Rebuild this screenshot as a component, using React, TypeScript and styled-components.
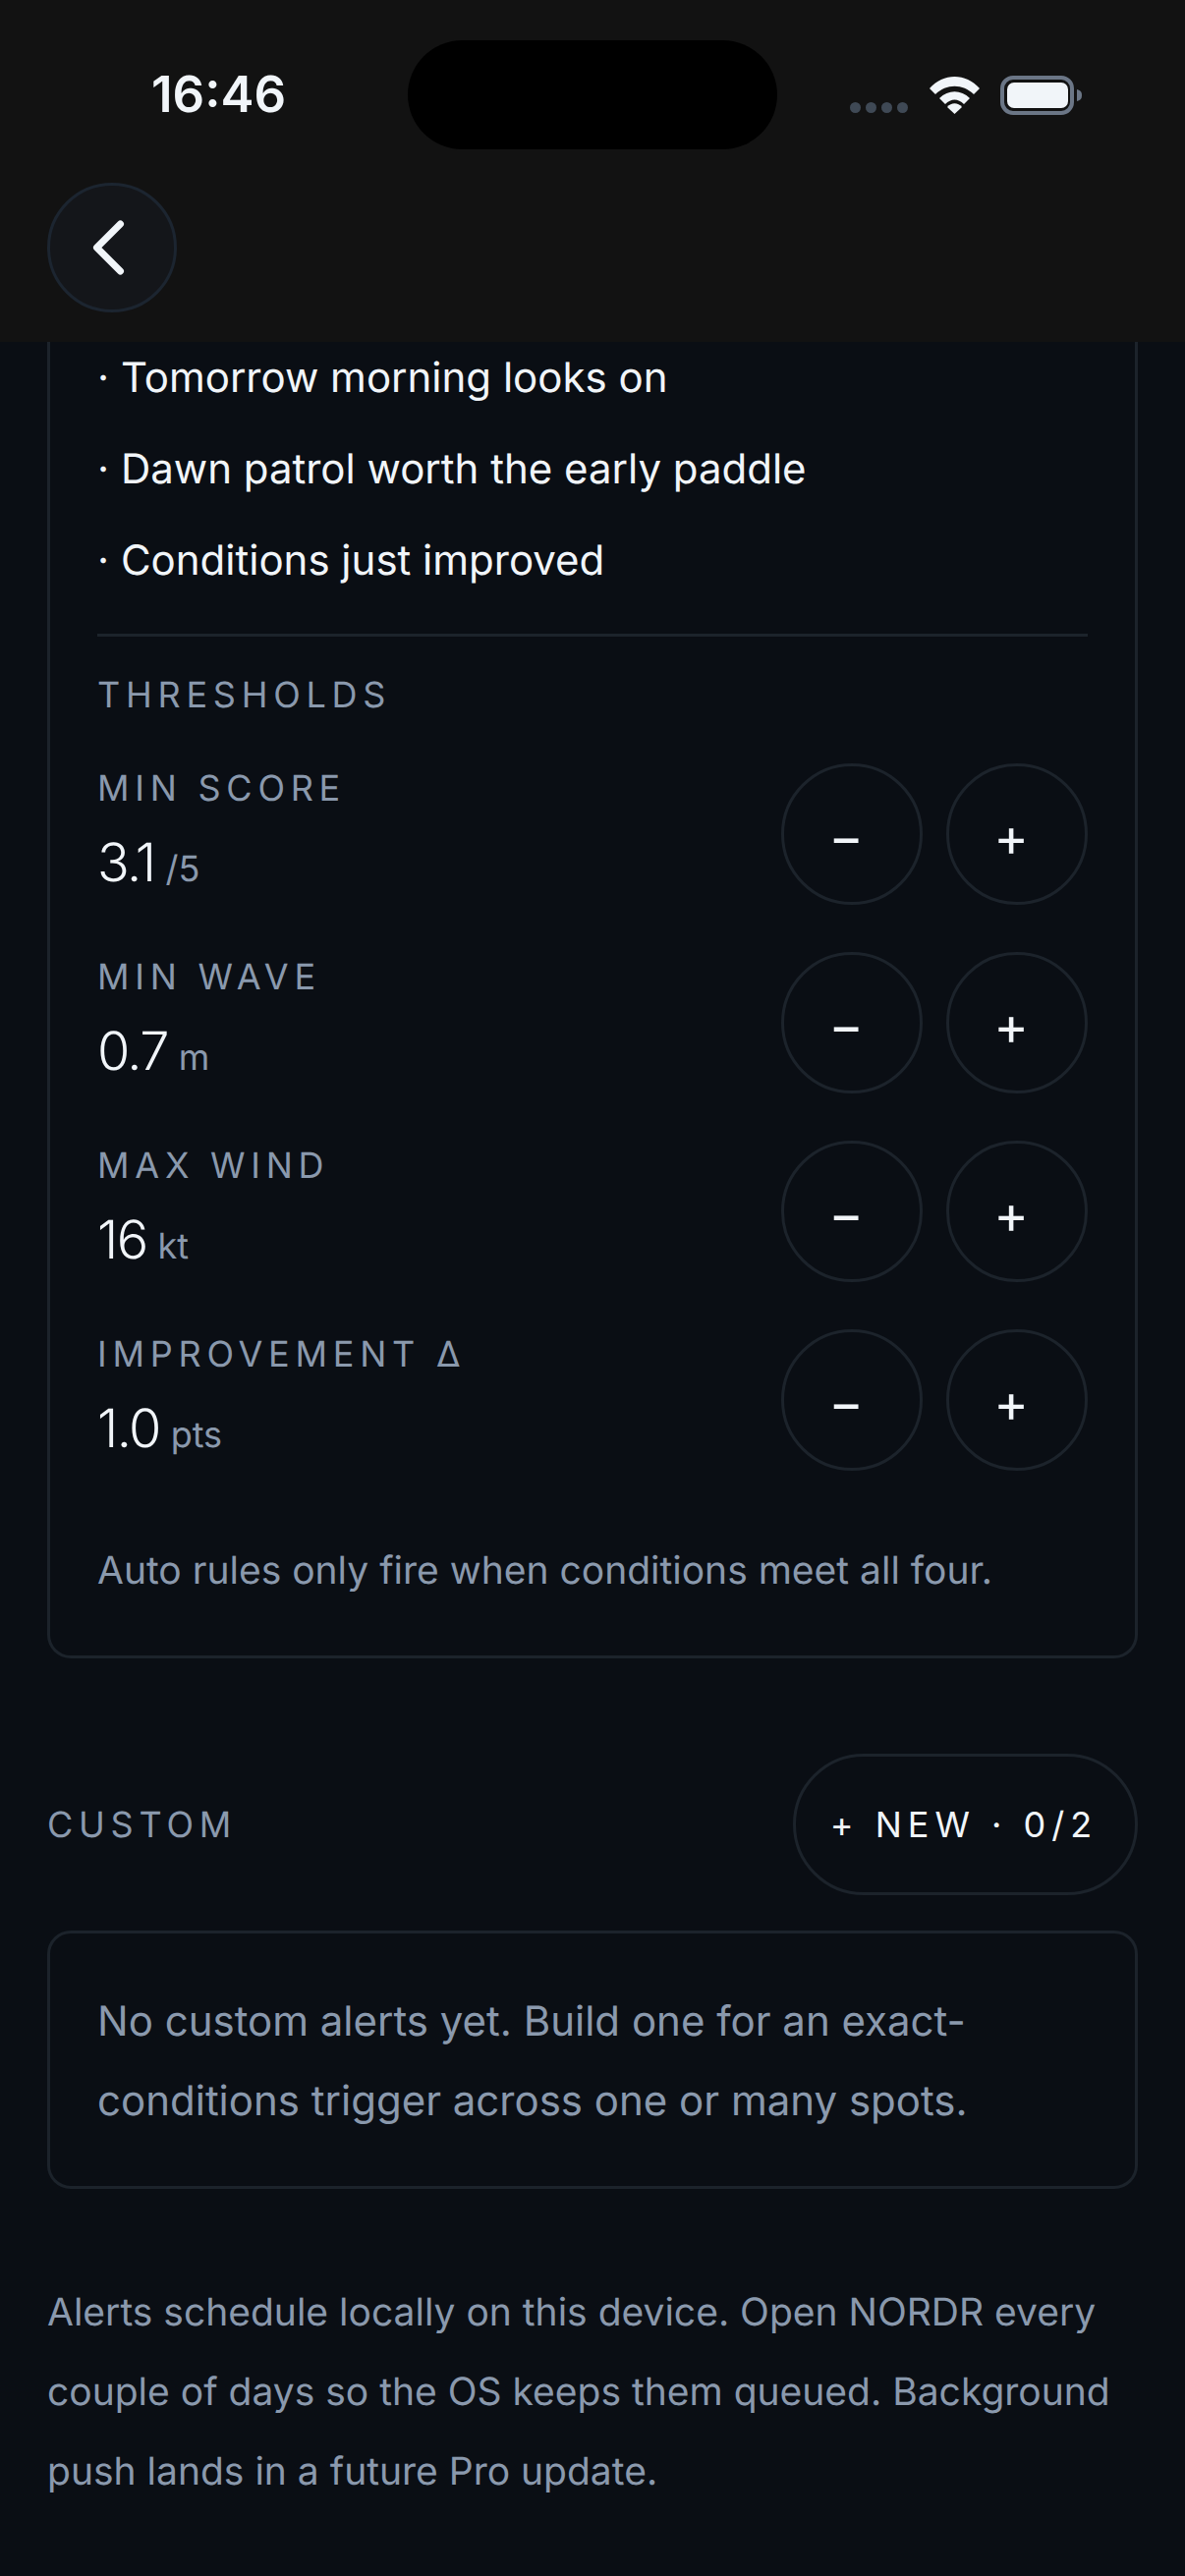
import React from 'react';
import styled, { createGlobalStyle } from 'styled-components';

const GlobalStyle = createGlobalStyle`
  html, body {
    margin: 0;
    padding: 0;
    background: #0a0e14;
  }
  * {
    box-sizing: border-box;
  }
`;

const Page = styled.div`
  width: 1206px;
  height: 2622px;
  overflow: hidden;
  background: #0a0e14;
  font-family: Inter, 'Noto Sans', sans-serif;
  color: #f1f5f9;
  text-rendering: geometricPrecision;
`;

const Header = styled.header`
  height: 348px;
  background: #121212;
  padding: 41px 48px 0 0;
`;

const StatusBar = styled.div`
  display: flex;
  align-items: center;
  height: 111px;
  padding-left: 154px;
`;

const Time = styled.div`
  width: 261px;
  font-size: 51px;
  font-weight: 600;
  line-height: 60px;
`;

const Island = styled.div`
  width: 376px;
  height: 111px;
  border-radius: 56px;
  background: #000;
`;

const StatusIcons = styled.div`
  display: flex;
  align-items: center;
  margin-left: 74px;
`;

const SignalDots = styled.div`
  display: flex;
  gap: 5px;
  align-self: flex-end;
  margin: 0 22px 2px 0;
`;

const SignalDot = styled.span`
  width: 11px;
  height: 11px;
  border-radius: 50%;
  background: #3f4955;
`;

const BackButton = styled.button`
  display: flex;
  align-items: center;
  justify-content: center;
  width: 132px;
  height: 132px;
  margin: 34px 0 0 48px;
  padding: 0;
  border: 3px solid #1c2530;
  border-radius: 50%;
  background: #14161a;
`;

const Main = styled.main`
  padding: 0 48px;
`;

const Card = styled.section<{ $cut?: boolean }>`
  border: 3px solid #1c232b;
  border-top-width: ${(p) => (p.$cut ? 0 : 3)}px;
  border-radius: ${(p) => (p.$cut ? '0 0 24px 24px' : '24px')};
  padding: ${(p) => (p.$cut ? '5px 48px 56px' : '48px')};
`;

const Bullets = styled.div`
  display: flex;
  flex-direction: column;
  gap: 30px;
  padding-bottom: 43px;
  border-bottom: 3px solid #1c232b;
`;

const Bullet = styled.div`
  font-size: 42px;
  line-height: 63px;
`;

const SectionLabel = styled.div<{ $spaced?: boolean }>`
  margin-top: ${(p) => (p.$spaced ? 37 : 0)}px;
  font-size: 36px;
  line-height: 44px;
  letter-spacing: 0.16em;
  color: #8a99ad;
`;

const Thresholds = styled.div`
  display: flex;
  flex-direction: column;
  gap: 48px;
  margin-top: 48px;
`;

const Row = styled.div`
  display: flex;
  align-items: center;
  justify-content: space-between;
`;

const RowText = styled.div`
  display: flex;
  flex-direction: column;
  gap: 24px;
  padding-bottom: 3px;
`;

const Value = styled.div`
  font-size: 54px;
  font-weight: 300;
  line-height: 62px;
  letter-spacing: -0.03em;
  white-space: nowrap;
`;

const Unit = styled.span`
  margin-left: 11px;
  font-size: 36px;
  letter-spacing: 0;
  font-weight: 400;
  color: #8a99ad;
`;

const Steppers = styled.div`
  display: flex;
  gap: 24px;
`;

const StepButton = styled.button`
  width: 144px;
  height: 144px;
  padding: 6px 12px 0 0;
  border: 3px solid #1c232b;
  border-radius: 50%;
  background: transparent;
  color: #f1f5f9;
  font-family: inherit;
  font-size: 54px;
  line-height: 1;
`;

const Note = styled.p`
  margin: 72px 0 0;
  font-size: 39px;
  line-height: 60px;
  color: #8a99ad;
`;

const CustomHead = styled.div`
  display: flex;
  align-items: center;
  justify-content: space-between;
  margin-top: 97px;
`;

const NewButton = styled.button`
  height: 144px;
  width: 351px;
  padding: 0 3px 0 0;
  border: 3px solid #1c232b;
  border-radius: 72px;
  background: transparent;
  color: #f1f5f9;
  font-family: inherit;
  font-size: 36px;
  letter-spacing: 6px;
  white-space: nowrap;
`;

const EmptyCard = styled(Card)`
  margin-top: 36px;
  padding: 49px 48px 46px;
`;

const Body = styled.p`
  margin: 0;
  font-size: 42px;
  line-height: 81px;
  color: #8a99ad;
`;

const Footer = styled(Body)`
  margin-top: 85px;
  font-size: 39px;
`;

const thresholds = [
  { label: 'MIN SCORE', value: '3.1', unit: '/5' },
  { label: 'MIN WAVE', value: '0.7', unit: 'm' },
  { label: 'MAX WIND', value: '16', unit: 'kt' },
  { label: 'IMPROVEMENT Δ', value: '1.0', unit: 'pts' },
];

const App = () => {
  return (
    <Page>
      <GlobalStyle />
      <Header>
        <StatusBar>
          <Time>16:46</Time>
          <Island />
          <StatusIcons>
            <SignalDots>
              <SignalDot />
              <SignalDot />
              <SignalDot />
              <SignalDot />
            </SignalDots>
            <svg width="51" height="38" viewBox="0 0 51 38">
              <path d="M0 12 C14 -4 37 -4 51 12 L45 18 C34 7 17 7 6 18 Z" fill="#f1f5f9" />
              <path d="M10 22 C19 13 32 13 41 22 L35 28 C29 22 22 22 16 28 Z" fill="#f1f5f9" />
              <path d="M18 31 C22 26 29 26 33 31 L25.5 38 Z" fill="#f1f5f9" />
            </svg>
            <svg width="86" height="40" viewBox="0 0 86 40" style={{ marginLeft: 21 }}>
              <rect x="2" y="2" width="71" height="36" rx="11" fill="none" stroke="#6b7686" strokeWidth="4" />
              <rect x="7" y="7" width="62" height="26" rx="7" fill="#f1f5f9" />
              <path d="M78 14 C82 15 83 17 83 20 C83 23 82 25 78 26 Z" fill="#6b7686" />
            </svg>
          </StatusIcons>
        </StatusBar>
        <BackButton aria-label="Back">
          <svg width="40" height="60" viewBox="0 0 40 60">
            <path d="M28.5 6 L4.5 30 L28.5 54" fill="none" stroke="#f1f5f9" strokeWidth="7" strokeLinecap="round" strokeLinejoin="round" />
          </svg>
        </BackButton>
      </Header>
      <Main>
        <Card $cut>
          <Bullets>
            <Bullet>· Tomorrow morning looks on</Bullet>
            <Bullet>· Dawn patrol worth the early paddle</Bullet>
            <Bullet>· Conditions just improved</Bullet>
          </Bullets>
          <SectionLabel $spaced>THRESHOLDS</SectionLabel>
          <Thresholds>
            {thresholds.map((t) => (
              <Row key={t.label}>
                <RowText>
                  <SectionLabel>{t.label}</SectionLabel>
                  <Value>
                    {t.value}
                    <Unit>{t.unit}</Unit>
                  </Value>
                </RowText>
                <Steppers>
                  <StepButton>−</StepButton>
                  <StepButton>+</StepButton>
                </Steppers>
              </Row>
            ))}
          </Thresholds>
          <Note>Auto rules only fire when conditions meet all four.</Note>
        </Card>
        <CustomHead>
          <SectionLabel>CUSTOM</SectionLabel>
          <NewButton>+ NEW · 0/2</NewButton>
        </CustomHead>
        <EmptyCard>
          <Body>
            No custom alerts yet. Build one for an exact-
            <br />
            conditions trigger across one or many spots.
          </Body>
        </EmptyCard>
        <Footer>
          Alerts schedule locally on this device. Open NORDR every couple of days so the OS keeps them queued. Background push lands in a future Pro update.
        </Footer>
      </Main>
    </Page>
  );
};

export default App;
